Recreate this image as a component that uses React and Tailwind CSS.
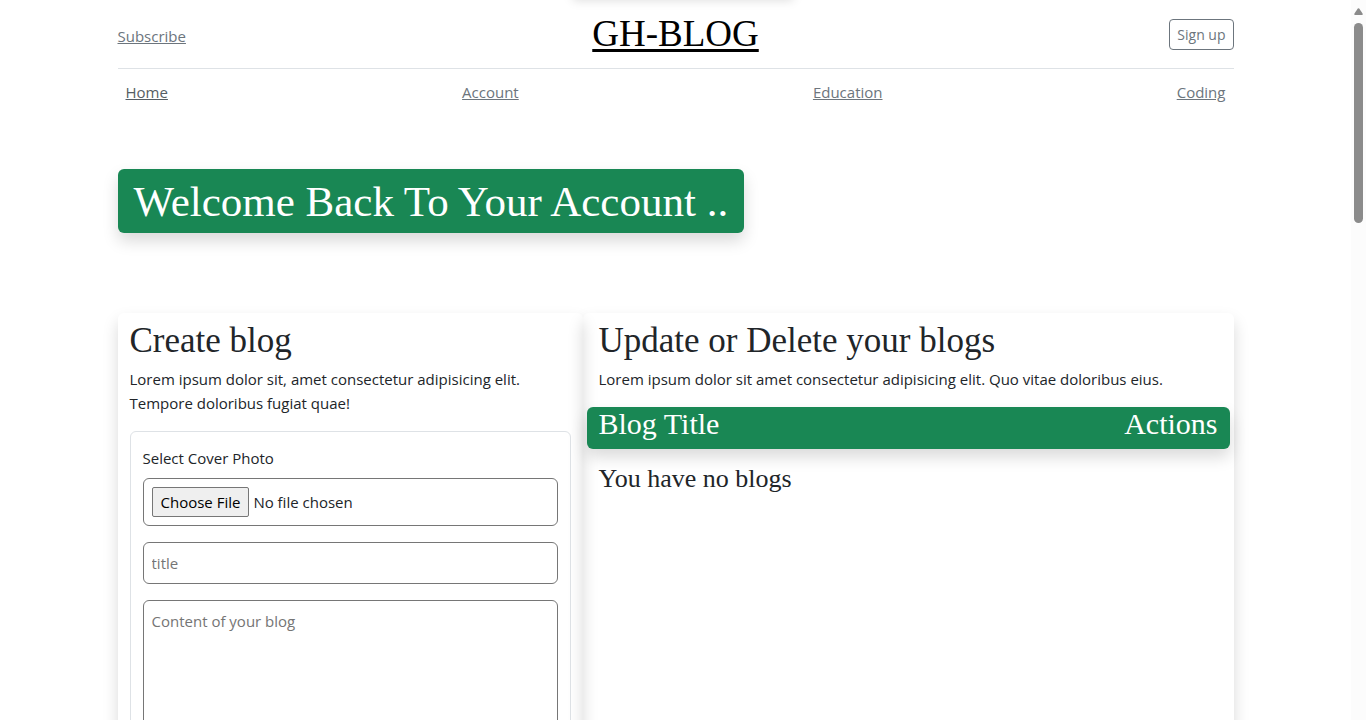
const navLinks = [
  { label: "Home", tone: "text-[#565e64]" },
  { label: "Account", tone: "text-[#6c757d]" },
  { label: "Education", tone: "text-[#6c757d]" },
  { label: "Coding", tone: "text-[#6c757d]" },
];

function Header() {
  return (
    <header className="flex h-[69px] items-center justify-between border-b border-[#dee2e6]">
      <div className="flex-1 pt-1">
        <a href="#subscribe" className="text-[#6c757d] underline">Subscribe</a>
      </div>
      <a
        href="#top"
        className="font-['Liberation_Serif',serif] text-[37px] leading-10 text-black underline decoration-3 underline-offset-3"
      >
        GH-BLOG
      </a>
      <div className="flex flex-1 justify-end">
        <button
          type="button"
          className="h-[31px] rounded border border-[#6c757d] px-[7px] pt-px text-sm leading-5 text-[#6c757d]"
        >
          Sign up
        </button>
      </div>
    </header>
  );
}

function Nav() {
  return (
    <nav className="flex justify-between px-2 pt-[11px] pb-3">
      {navLinks.map((link) => (
        <a key={link.label} href={"#" + link.label.toLowerCase()} className={"underline " + link.tone}>
          {link.label}
        </a>
      ))}
    </nav>
  );
}

function CreateBlog() {
  return (
    <section className="w-5/12 rounded-md px-3 py-2 shadow-[0_8px_16px_rgba(0,0,0,0.15)]">
      <h2 className="mb-1.5 font-['Liberation_Serif',serif] text-[35px] leading-10">Create blog</h2>
      <p className="mb-4">
        Lorem ipsum dolor sit, amet consectetur adipisicing elit. Tempore doloribus fugiat quae!
      </p>
      <form className="flex flex-col rounded-md border border-[#dee2e6] px-3 pt-[14px] pb-4">
        <label htmlFor="cover" className="mb-2">Select Cover Photo</label>
        <input
          id="cover"
          type="file"
          className="mb-4 w-full rounded-md border border-[#767676] p-2 leading-6 file:mr-1 file:h-[30px] file:rounded-xs file:border file:border-solid file:border-[#767676] file:bg-[#efefef] file:px-2 file:text-black"
        />
        <input
          type="text"
          aria-label="title"
          placeholder="title"
          className="mb-4 h-[42px] w-full rounded-md border border-[#767676] px-2 placeholder:text-[#757575]"
        />
        <textarea
          aria-label="Content of your blog"
          placeholder="Content of your blog"
          rows={10}
          className="w-full resize-none rounded-md border border-[#767676] px-2 py-2 placeholder:text-[#757575]"
        />
      </form>
    </section>
  );
}

function ManageBlogs() {
  return (
    <section className="w-7/12 rounded-md px-1 py-2 shadow-[0_8px_16px_rgba(0,0,0,0.15)]">
      <div className="px-3">
        <h2 className="mb-1.5 font-['Liberation_Serif',serif] text-[35px] leading-10">
          Update or Delete your blogs
        </h2>
        <p className="mb-4">
          Lorem ipsum dolor sit amet consectetur adipisicing elit. Quo vitae doloribus eius.
        </p>
      </div>
      <div className="mb-4 flex justify-between rounded-md bg-[#198754] px-3 pb-2 font-['Liberation_Serif',serif] text-[30px] leading-[34px] text-white shadow-[0_8px_16px_rgba(0,0,0,0.15)]">
        <h3>Blog Title</h3>
        <h3>Actions</h3>
      </div>
      <h4 className="px-3 font-['Liberation_Serif',serif] text-[26px] leading-7">You have no blogs</h4>
    </section>
  );
}

function ScrollTrack() {
  return (
    <div aria-hidden="true" className="flex w-[15px] flex-col items-center bg-[#fcfcfc] pt-2">
      <svg width="9" height="7" viewBox="0 0 9 7" className="mb-2">
        <path d="M3.8.6Q4.5-.2 5.2.6L8.7 5.8Q9 7 8 7H1Q0 7 .3 5.8Z" fill="#8b8b8b" />
      </svg>
      <div className="h-[200px] w-[9px] rounded-full bg-[#8b8b8b]" />
    </div>
  );
}

export default function App() {
  return (
    <div className="relative flex h-screen overflow-hidden bg-white font-['Open_Sans',sans-serif] text-[15px] leading-6 text-[#212529]">
      <div className="absolute bottom-full left-1/2 h-12 w-[220px] -translate-x-1/2 shadow-[0_0_10px_rgba(0,0,0,0.15)]" />
      <div className="min-w-0 flex-1 overflow-hidden">
        <div className="mx-auto w-full max-w-[1140px] px-3">
          <Header />
          <Nav />
          <main>
            <h1 className="mt-[53px] mb-20 w-fit rounded-md bg-[#198754] px-4 pt-[9px] pb-[7px] font-['Liberation_Serif',serif] text-[43px] leading-[48px] text-white shadow-[0_8px_16px_rgba(0,0,0,0.15)]">
              Welcome Back To Your Account ..
            </h1>
            <div className="flex">
              <CreateBlog />
              <ManageBlogs />
            </div>
          </main>
        </div>
      </div>
      <ScrollTrack />
    </div>
  );
}
